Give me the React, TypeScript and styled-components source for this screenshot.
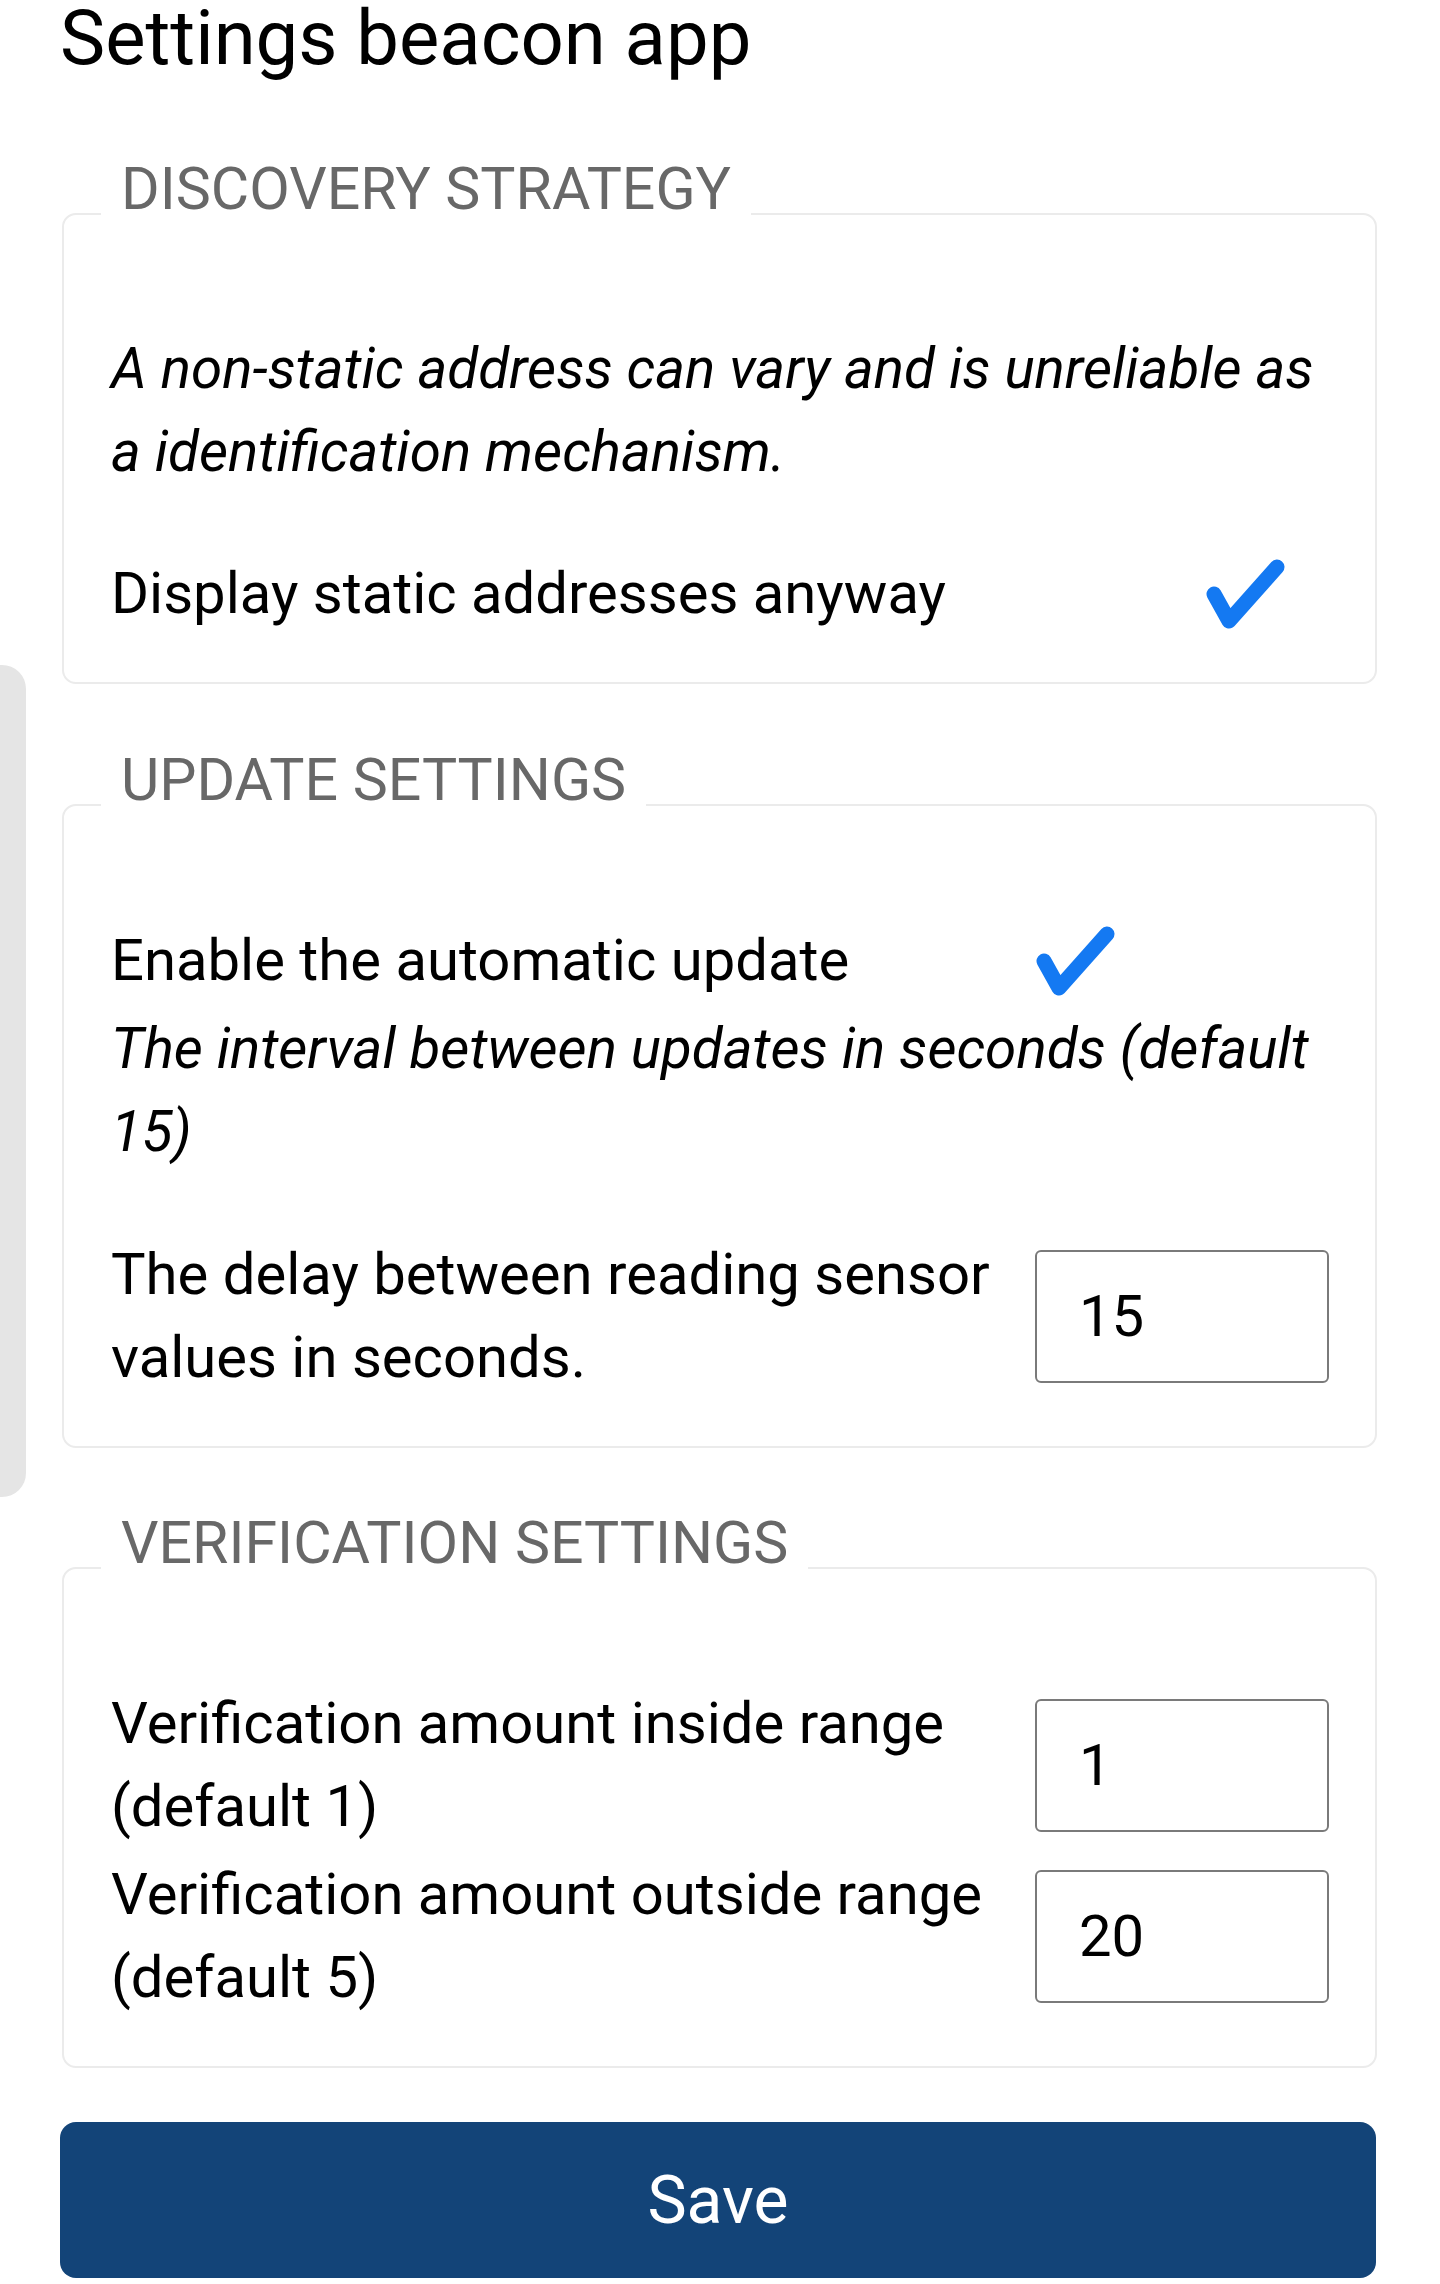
import React from 'react';
import styled, { createGlobalStyle } from 'styled-components';

const GlobalStyle = createGlobalStyle`
  html, body {
    margin: 0;
    padding: 0;
    background: #ffffff;
  }
  body {
    font-family: Roboto, 'Noto Sans', 'Liberation Sans', sans-serif;
    color: #000000;
  }
`;

const Page = styled.div`
  position: relative;
  width: 1440px;
  min-height: 2284px;
  box-sizing: border-box;
  padding: 0 63px 5px 62px;
`;

const Title = styled.h1`
  margin: 0 0 0 -2px;
  font-size: 76px;
  font-weight: 400;
  line-height: 76px;
  color: #000;
`;

const Group = styled.fieldset<{ $top: number }>`
  margin: ${(p) => p.$top}px 0 0;
  padding: 56px 46px 47px 47px;
  border: 2px solid #ebebeb;
  border-radius: 14px;
  min-inline-size: 0;
`;

const Legend = styled.legend`
  margin-left: -10px;
  padding: 0 20px 50px;
  font-size: 59px;
  line-height: 66px;
  color: #686868;
  text-transform: uppercase;
`;

const Note = styled.p<{ $mt?: number }>`
  margin: ${(p) => p.$mt ?? 0}px 0 0;
  font-size: 56.5px;
  line-height: 83px;
  font-style: italic;
`;

const Row = styled.div<{ $control: number; $mt?: number }>`
  display: grid;
  grid-template-columns: minmax(0, 1fr) ${(p) => p.$control}px;
  column-gap: 20px;
  align-items: center;
  margin-top: ${(p) => p.$mt ?? 0}px;
`;

const Label = styled.div`
  font-size: 58px;
  line-height: 83px;
`;

const CheckMark = styled.svg`
  display: block;
`;

const NumberInput = styled.input`
  display: block;
  width: 294px;
  height: 133px;
  box-sizing: border-box;
  border: 2px solid #7a7a7a;
  border-radius: 6px;
  padding: 0 42px;
  font-family: Roboto, 'Noto Sans', sans-serif;
  font-size: 58px;
  color: #000;
  background: #fff;
  outline: none;
`;

const SaveButton = styled.button`
  display: block;
  width: 1316px;
  height: 156px;
  margin: 54px 0 0 -2px;
  border: 0;
  border-radius: 16px;
  background: #134478;
  color: #ffffff;
  font-family: Roboto, 'Noto Sans', sans-serif;
  font-size: 66px;
  font-weight: 400;
  cursor: pointer;
`;

const EdgeHandle = styled.div`
  position: absolute;
  left: 0;
  top: 665px;
  width: 26px;
  height: 832px;
  background: #e5e5e5;
  border-radius: 0 24px 24px 0;
`;

const Check = () => (
  <CheckMark viewBox="0 0 80 72" width={80} height={72}>
    <polyline
      points="9,36 24,63 72,9"
      fill="none"
      stroke="#1479f2"
      strokeWidth={15}
      strokeLinecap="round"
      strokeLinejoin="round"
    />
  </CheckMark>
);

const App = () => {
  return (
    <Page>
      <GlobalStyle />
      <Title>Settings beacon app</Title>

      <Group $top={80}>
        <Legend>Discovery strategy</Legend>
        <Note>A non-static address can vary and is unreliable as a identification mechanism.</Note>
        <Row $control={124} $mt={58}>
          <Label>Display static addresses anyway</Label>
          <Check />
        </Row>
      </Group>

      <Group $top={63}>
        <Legend>Update settings</Legend>
        <Row $control={294}>
          <Label>Enable the automatic update</Label>
          <Check />
        </Row>
        <Note $mt={6}>The interval between updates in seconds (default 15)</Note>
        <Row $control={294} $mt={59}>
          <Label>The delay between reading sensor values in seconds.</Label>
          <NumberInput type="text" defaultValue="15" />
        </Row>
      </Group>

      <Group $top={62}>
        <Legend>Verification settings</Legend>
        <Row $control={294}>
          <Label>Verification amount inside range (default 1)</Label>
          <NumberInput type="text" defaultValue="1" />
        </Row>
        <Row $control={294} $mt={5}>
          <Label>Verification amount outside range (default 5)</Label>
          <NumberInput type="text" defaultValue="20" />
        </Row>
      </Group>

      <SaveButton>Save</SaveButton>
      <EdgeHandle />
    </Page>
  );
};

export default App;
